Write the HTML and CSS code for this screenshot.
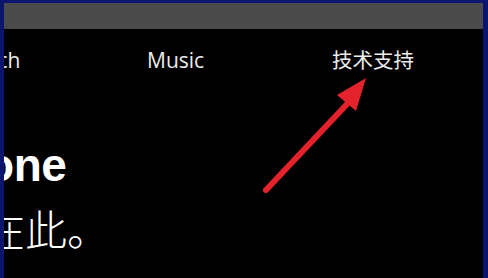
FILE: index.html
```html
<!DOCTYPE html>
<html lang="zh-CN">
<head>
<meta charset="utf-8">
<link rel="stylesheet" href="styles.css">
</head>
<body>
<div class="frame">
  <div class="screen">
    <div class="topbar"></div>
    <nav class="nav">
      <span class="nav-item watch">Watch</span>
      <span class="nav-item music">Music</span>
      <span class="nav-item support">技术支持</span>
    </nav>
    <div class="hero">
      <h1 class="hero-title">iPhone</h1>
      <p class="hero-sub">在此。</p>
    </div>
    <svg class="arrow" width="120" height="130" viewBox="0 0 120 130">
      <line x1="5" y1="112" x2="88" y2="24" stroke="#e3222b" stroke-width="6" stroke-linecap="round"/>
      <polygon points="105,0 76,17 95,33" fill="#e3222b"/>
    </svg>
  </div>
</div>
</body>
</html>
```

FILE: styles.css
```css
html, body {
  margin: 0;
  padding: 0;
  background: #0c156e;
}
.frame {
  width: 488px;
  height: 278px;
  box-sizing: border-box;
  padding: 3px 5px 0 4px;
  background: #0c156e;
}
.screen {
  position: relative;
  height: 275px;
  background: #000;
  overflow: hidden;
  display: flex;
  flex-direction: column;
}
.topbar {
  height: 26px;
  background: #4a4a4a;
  flex: none;
}
.nav {
  display: flex;
  align-items: baseline;
  margin-left: -45px;
  padding-top: 16px;
  font-family: "Open Sans", "Noto Sans CJK SC", sans-serif;
  font-size: 21px;
  color: #ececec;
  line-height: 28px;
}
.watch { width: 188px; }
.music { width: 185px; }
.support {
  font-family: "Noto Sans CJK SC", sans-serif;
  font-size: 20.5px;
}
.hero {
  padding-top: 66px;
  color: #fff;
}
.hero-title {
  margin: 0 0 0 -88px;
  font-family: "Liberation Sans", Arial, sans-serif;
  font-weight: 700;
  font-size: 46px;
  line-height: 50px;
  letter-spacing: -0.5px;
}
.hero-sub {
  margin: 14px 0 0 -21px;
  font-family: "Noto Sans CJK SC", sans-serif;
  font-weight: 300;
  font-size: 42px;
  line-height: 48px;
}
.arrow {
  position: absolute;
  left: 257px;
  top: 75px;
}
```
